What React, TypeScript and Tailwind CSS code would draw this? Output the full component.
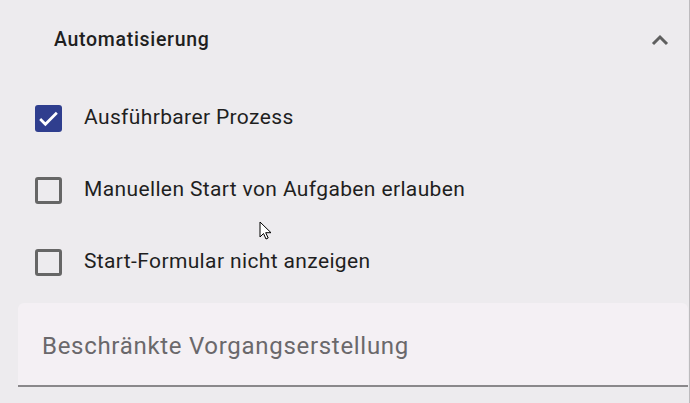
import React from "react";

const rows = [
  { label: "Ausführbarer Prozess", checked: true },
  { label: "Manuellen Start von Aufgaben erlauben", checked: false },
  { label: "Start-Formular nicht anzeigen", checked: false },
];

function Checkbox({ checked }: { checked: boolean }) {
  if (checked) {
    return (
      <div className="flex h-[27px] w-[27px] items-center justify-center rounded-[3px] bg-[#2f3e8e]">
        <svg width="25" height="25" viewBox="0 0 24 24" fill="none">
          <path d="M4 12.5l5 5L20 6.5" stroke="white" strokeWidth="2.6" />
        </svg>
      </div>
    );
  }
  return <div className="h-[27px] w-[27px] rounded-[3px] border-[3px] border-[#666666]" />;
}

export default function App() {
  return (
    <div
      className="relative h-[403px] w-[690px] overflow-hidden border-r border-[#bdbbbe] bg-[#edebee] text-[#1f1f1f]"
      style={{ fontFamily: "Roboto, 'Noto Sans', sans-serif" }}
    >
      {/* Panel header */}
      <div className="flex h-[80px] items-center justify-between pl-[54px] pr-[20px]">
        <span className="text-[19.5px] font-medium tracking-[0.7px]">Automatisierung</span>
        <svg width="18" height="12" viewBox="0 0 18 12" fill="none">
          <path d="M2 10L9 3l7 7" stroke="#5f5f5f" strokeWidth="3" />
        </svg>
      </div>

      {/* Options */}
      <div className="flex flex-col pt-[2px]">
        {rows.map((r) => (
          <div key={r.label} className="flex h-[72px] items-center gap-[22px] pl-[35px]">
            <Checkbox checked={r.checked} />
            <span className="text-[21px] tracking-[0.37px]">{r.label}</span>
          </div>
        ))}
      </div>

      {/* Text field */}
      <div className="ml-[18px] mr-[1px] mt-[5px] flex h-[84px] items-center rounded-t-[6px] border-b-2 border-[#8a888b] bg-[#f4f0f4] pl-[24px] pt-[3px]">
        <span className="text-[24px] tracking-[0.7px] text-[#6a686b]">Beschränkte Vorgangserstellung</span>
      </div>

      {/* Mouse cursor */}
      <svg className="absolute left-[259px] top-[221px]" width="14" height="20" viewBox="0 0 14 20">
        <path d="M1 1v15l3.5-3.5 2.5 5.5 2.2-1-2.5-5.3H12z" fill="white" stroke="black" strokeWidth="1" />
      </svg>
    </div>
  );
}
